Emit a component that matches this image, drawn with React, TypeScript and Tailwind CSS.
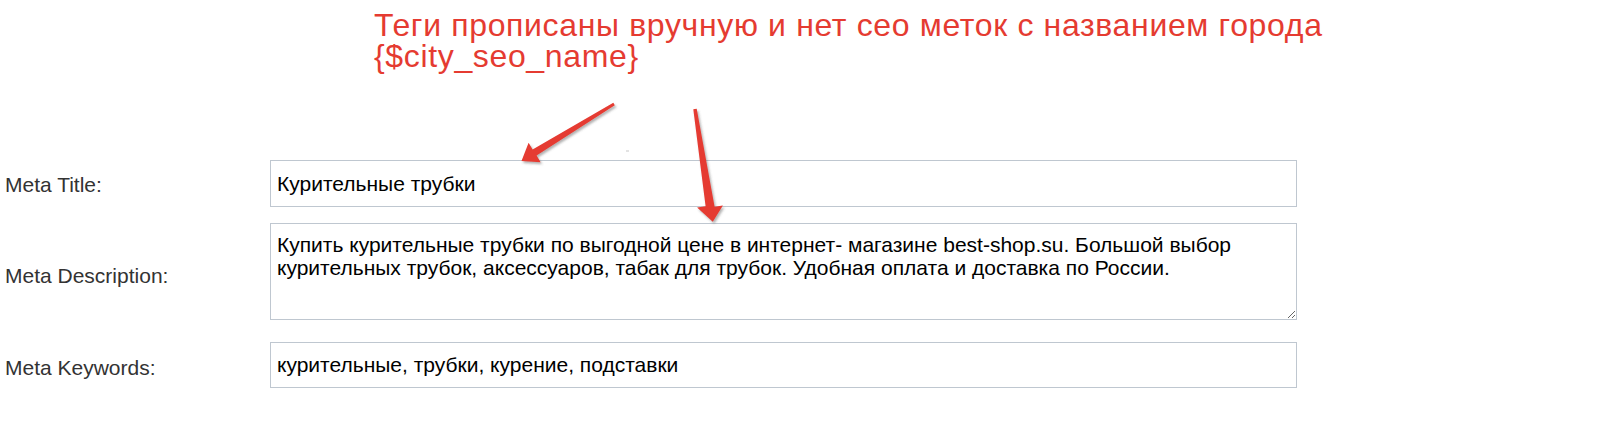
import React from "react";

const fieldBorder = "border border-[#bfc7d0] bg-white";

const Arrows = () => (
  <svg
    className="absolute inset-0 pointer-events-none"
    width="1608"
    height="443"
    viewBox="0 0 1608 443"
  >
    <defs>
      <filter id="shade" x="-20%" y="-20%" width="140%" height="140%">
        <feDropShadow dx="1.5" dy="2" stdDeviation="1.2" floodColor="#555" floodOpacity="0.45" />
      </filter>
    </defs>
    {/* arrow to the title field */}
    <polygon
      filter="url(#shade)"
      fill="#e53b31"
      points="614.8,105.2 613.3,102.8 532.6,149.6 528.6,142.8 521.5,161 540.6,162.2 536.6,155.6"
    />
    {/* arrow to the description field */}
    <polygon
      filter="url(#shade)"
      fill="#e53b31"
      points="693.3,109.3 696.7,108.7 714.6,206.8 722.9,205.5 712.8,221.8 697.1,207.6 705.6,206.2"
    />
    <rect x="626" y="150.5" width="3" height="1" fill="#c8c8c8" />
  </svg>
);

export default function App() {
  return (
    <div className="relative w-[1608px] h-[443px] bg-white font-['Liberation_Sans',Arial,sans-serif] overflow-hidden">
      <div className="pl-[374px] pt-[10px] text-[32px] leading-[31px] tracking-[0.65px] text-[#e53b31] whitespace-nowrap">
        <div className="h-[31px]">Теги прописаны вручную и нет сео меток с названием города</div>
        <div className="h-[31px]">{"{$city_seo_name}"}</div>
      </div>

      <div className="mt-[88px] flex flex-col">
        <div className="flex items-center h-[47px]">
          <label className="w-[270px] pl-[5px] pt-[3px] text-[21px] text-[#333]">Meta Title:</label>
          <input
            className={`${fieldBorder} w-[1027px] h-[47px] px-[6px] text-[21px] text-black outline-none`}
            defaultValue="Курительные трубки"
          />
        </div>

        <div className="flex items-center h-[97px] mt-[16px]">
          <label className="w-[270px] pl-[5px] pt-[9px] text-[21px] text-[#333]">Meta Description:</label>
          <textarea
            className={`${fieldBorder} w-[1027px] h-[97px] px-[6px] pt-[10px] text-[21px] leading-[22.5px] text-black outline-none`}
            defaultValue="Купить курительные трубки по выгодной цене в интернет- магазине best-shop.su. Большой выбор курительных трубок, аксессуаров, табак для трубок. Удобная оплата и доставка по России."
          />
        </div>

        <div className="flex items-center h-[46px] mt-[22px]">
          <label className="w-[270px] pl-[5px] pt-[6px] text-[21px] text-[#333]">Meta Keywords:</label>
          <input
            className={`${fieldBorder} w-[1027px] h-[46px] px-[6px] text-[21px] text-black outline-none`}
            defaultValue="курительные, трубки, курение, подставки"
          />
        </div>
      </div>

      <Arrows />
    </div>
  );
}
